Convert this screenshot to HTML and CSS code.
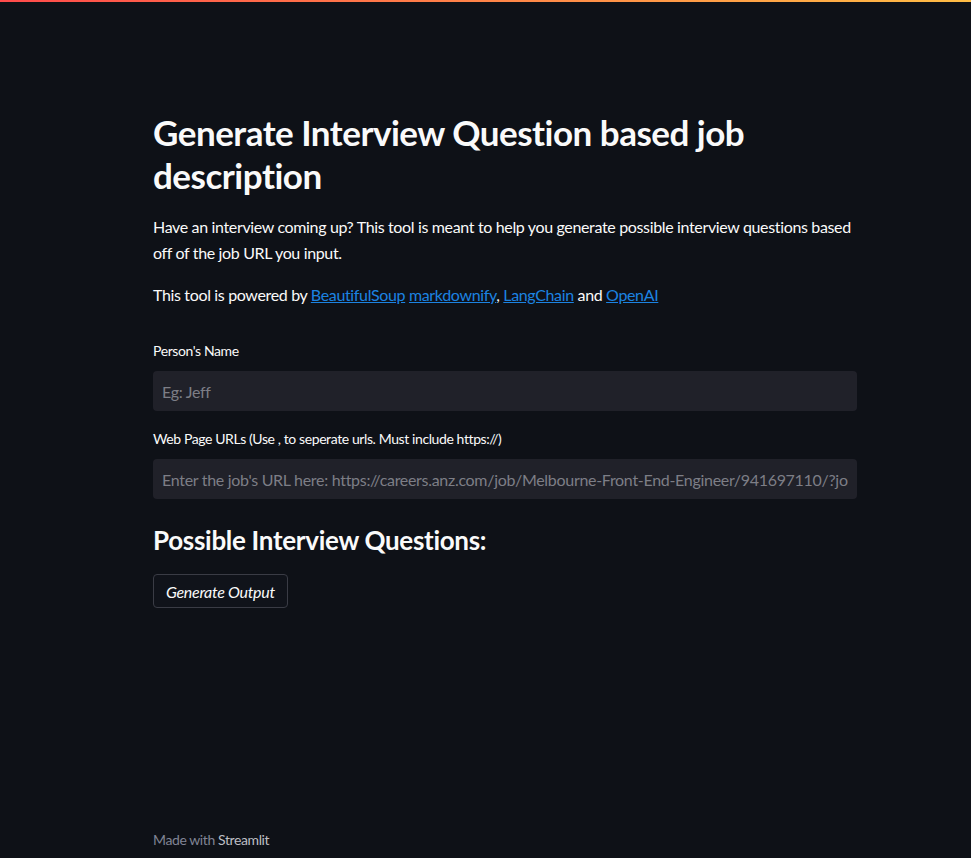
FILE: index.html
```html
<!DOCTYPE html>
<html lang="en">
<head>
<meta charset="utf-8">
<title>Generate Interview Question</title>
<link rel="stylesheet" href="styles.css">
</head>
<body>
<div class="decoration"></div>
<div class="app">
  <main class="block">
    <h1 class="title">Generate Interview Question based job description</h1>
    <p class="text">Have an interview coming up? This tool is meant to help you generate possible interview questions based off of the job URL you input.</p>
    <p class="text">This tool is powered by <a href="#">BeautifulSoup</a> <a href="#">markdownify</a>, <a href="#">LangChain</a> and <a href="#">OpenAI</a></p>
    <div class="field first">
      <label class="label">Person's Name</label>
      <input class="input" type="text" placeholder="Eg: Jeff">
    </div>
    <div class="field">
      <label class="label">Web Page URLs (Use , to seperate urls. Must include https://)</label>
      <input class="input" type="text" placeholder="Enter the job's URL here: https://careers.anz.com/job/Melbourne-Front-End-Engineer/941697110/?jobPipeline=LinkedIn">
    </div>
    <h2 class="subtitle">Possible Interview Questions:</h2>
    <button class="btn" type="button">Generate Output</button>
  </main>
  <footer class="footer">Made with <span class="brand">Streamlit</span></footer>
</div>
</body>
</html>
```
FILE: styles.css
```css
* { box-sizing: border-box; }
html, body {
  margin: 0;
  padding: 0;
  background: #0e1117;
  color: #fafafa;
  font-family: Lato, "Noto Sans", sans-serif;
}
.decoration {
  height: 2px;
  background: linear-gradient(90deg, #ff4b4b, #ffbd45);
}
.app {
  height: 856px;
  display: flex;
  flex-direction: column;
  padding-left: 153px;
}
.block {
  width: 704px;
  padding-top: 109px;
  flex: 1;
}
.title {
  margin: 0;
  font-size: 35px;
  line-height: 43px;
  font-weight: 700;
  letter-spacing: -0.5px;
  color: #fafafa;
}
.text {
  margin: 17px 0 0;
  font-size: 16px;
  line-height: 26px;
  letter-spacing: -0.35px;
}
.text + .text { margin-top: 16px; }
.text a { color: #1c83e1; text-decoration: underline; }
.field { margin-top: 18px; }
.field.first { margin-top: 33px; }
.label {
  display: block;
  font-size: 14px;
  line-height: 20px;
  margin-bottom: 10px;
  letter-spacing: -0.4px;
  color: #fafafa;
}
.input {
  display: block;
  width: 704px;
  height: 40px;
  border: none;
  border-radius: 4px;
  background: #202129;
  padding: 0 9px;
  font-family: inherit;
  font-size: 16px;
  letter-spacing: -0.3px;
  color: #fafafa;
  outline: none;
}
.input::placeholder { color: #7d7e86; }
.subtitle {
  margin: 23px 0 0;
  font-size: 26px;
  line-height: 36px;
  font-weight: 700;
  letter-spacing: -0.3px;
}
.btn {
  display: block;
  margin-top: 16px;
  height: 34px;
  padding: 0 12px;
  background: #10131a;
  border: 1px solid #3a3c45;
  border-radius: 4px;
  color: #fafafa;
  font-family: inherit;
  font-size: 16px;
  font-style: italic;
  letter-spacing: -0.3px;
}
.footer {
  height: 27px;
  font-size: 14px;
  letter-spacing: -0.4px;
  color: #808495;
}
.brand { color: #bdbec4; }
```
